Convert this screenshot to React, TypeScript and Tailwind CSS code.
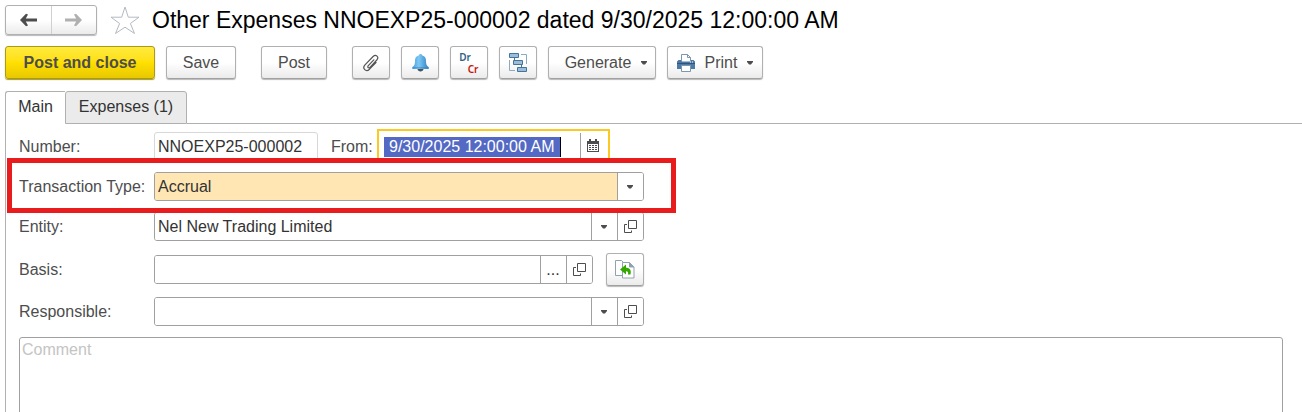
import type { ReactNode } from 'react';

const raised =
  'flex items-center justify-center rounded-[3px] border border-[#b0b0b0] border-b-[#a0a0a0] bg-linear-to-b from-white from-50% to-[#ebebeb] text-[#4d4d4d] shadow-[0_1px_1px_#b8b8b8]';

function Caret() {
  return (
    <svg width="6" height="4" viewBox="0 0 6 4" fill="#4d4d4d">
      <path d="M0 0h6v1L4 3.500H2L0 1z" />
    </svg>
  );
}

function OpenIcon() {
  return (
    <svg width="13" height="13" viewBox="0 0 13 13" fill="none" stroke="#4d4d4d">
      <path d="M4.500.5h8v8h-8z" />
      <path d="M3 4.500H.5v8h7V10.500" />
    </svg>
  );
}

function ArrowIcon({ color, flip }: { color: string; flip?: boolean }) {
  return (
    <svg width="17" height="14" viewBox="0 0 17 14" className={flip ? 'rotate-180' : ''}>
      <path d="M0 7 6 .8 8 1.500 5.800 5.500H17v3H5.800L8 12.500l-2 .7z" fill={color} />
    </svg>
  );
}

function StarIcon() {
  return (
    <svg width="30" height="29" viewBox="0 0 30 29" fill="none" stroke="#b4bac2">
      <path d="M15 1 18.300 11.200H29L20.400 17.500 24.500 27.500 15 21.200 5.500 27.500 9.600 17.500 1 11.200H11.700z" />
    </svg>
  );
}

function ClipIcon() {
  return (
    <svg width="18" height="18" viewBox="0 0 18 18" fill="none" stroke="#555" strokeWidth="1.200" strokeLinecap="round" strokeLinejoin="round">
      <path d="M11.800 5.800 6.300 11.700C4.900 13.300 6.700 14.700 8 13.300L14.800 6C17.400 3 13.900-.2 11.100 2.500L3 10.900C-.2 14.400 4 18.600 7.500 15.200L14 8.500" />
    </svg>
  );
}

function BellIcon() {
  return (
    <svg width="17" height="18" viewBox="0 0 17 18">
      <defs>
        <linearGradient id="bell" x1="0" x2="1">
          <stop offset="0" stopColor="#4a9bd4" />
          <stop offset=".4" stopColor="#7cc8f7" />
          <stop offset="1" stopColor="#2f80bd" />
        </linearGradient>
      </defs>
      <path d="M5.500 15h6c0 1.500-1.500 2.500-3 2.500s-3-1-3-2.500z" fill="#46525c" />
      <path d="M8.500 0C7.200 0 6.800.8 6.700 1.500 3.800 2.200 3 4.200 3 7c0 3.200-.5 4.500-2.500 6-.8 1-.3 2 .8 2h14.400c1.100 0 1.600-1 .8-2-2-1.500-2.500-2.800-2.500-6 0-2.800-.8-4.800-3.700-5.500C10.200.8 9.800 0 8.500 0z" fill="url(#bell)" />
      <path d="M1 13.800h15" stroke="#3a86bd" strokeWidth=".8" />
    </svg>
  );
}

function StructureIcon() {
  return (
    <svg width="18" height="19" viewBox="0 0 18 19" fill="#9bbdd9" stroke="#43749c">
      <path d="M12 1.500h5.500V11M.5 7v10.500H6" fill="none" stroke="#8aa9c2" />
      <path d="M5.500 4.500v4M12.500 11v4" fill="none" />
      <path d="M.5.500h9v4h-9zM4.500 7.500h9v4h-9zM8.500 14.500h9v4h-9z" />
    </svg>
  );
}

function PrinterIcon() {
  return (
    <svg width="18" height="18" viewBox="0 0 18 18">
      <path d="M4.500 8V.5h6l3 3V8" fill="#fff" stroke="#7e95ae" />
      <path d="M10.500.5v3h3" fill="none" stroke="#7e95ae" />
      <path d="M1.500 6H4v1.500h10V6h2.500L18 7.500V15H0V7.500z" fill="#4f79a5" />
      <path d="M0 9.500h18" stroke="#2e5580" />
      <path d="M13 7.500h1v1h-1zM15 7.500h1v1h-1z" fill="#fff" />
      <path d="M4.500 11.500h9v6h-9z" fill="#fff" stroke="#7e95ae" />
    </svg>
  );
}

function CalendarIcon() {
  return (
    <svg width="12" height="13" viewBox="0 0 12 13" shapeRendering="crispEdges">
      <path d="M0 2h12v11H0zM2 0h2v2H2zM8 0h2v2H8z" fill="#4d4d4d" />
      <path d="M1 5h10v7H1z" fill="#fff" />
      <path d="M2 6h2v1H2zM5 6h2v1H5zM8 6h2v1H8zM2 8h2v1H2zM5 8h2v1H5zM8 8h2v1H8zM2 10h2v1H2zM5 10h2v1H5zM8 10h2v1H8z" fill="#4d4d4d" />
    </svg>
  );
}

function FillIcon() {
  return (
    <svg width="20" height="19" viewBox="0 0 20 19" fill="#fff" stroke="#8fa3ad">
      <path d="M.5.500h6l3 3v12h-9z" />
      <path d="M7.500 2.500h7l4.500 4.500v11H7.500z" />
      <path d="M14.500 2.500v4.500h4.500" fill="#8fa3ad" />
      <path d="M5 9.500 11 4.500v3.200c4 0 5.500 2.300 4.500 6.800h-2.500c.5-2.500 0-3.300-2-3.300v3.300z" fill="#35a800" stroke="none" />
    </svg>
  );
}

type FieldProps = {
  id: string;
  label: string;
  value?: string;
  width: string;
  highlight?: boolean;
  actions: { label: string; icon: ReactNode }[];
  children?: ReactNode;
};

function Field({ id, label, value, width, highlight, actions, children }: FieldProps) {
  return (
    <div className="flex h-[29px] items-center">
      <label htmlFor={id} className="w-[135px] shrink-0 whitespace-nowrap text-[#4d4d4d]">
        {label}
      </label>
      <div className={`flex h-[29px] overflow-hidden rounded-[3px] border border-[#a0a0a0] ${width}`}>
        <input
          id={id}
          defaultValue={value}
          className={`min-w-0 flex-1 px-[3px] outline-none ${highlight ? 'bg-[#ffe6b3]' : 'bg-white'}`}
        />
        {actions.map((action) => (
          <button
            key={action.label}
            aria-label={action.label}
            className="flex w-[26px] shrink-0 items-center justify-center border-l border-[#a0a0a0] bg-white pr-px"
          >
            {action.icon}
          </button>
        ))}
      </div>
      {children}
    </div>
  );
}

export default function App() {
  const choose = { label: 'Choose from list', icon: <Caret /> };
  const open = { label: 'Open', icon: <OpenIcon /> };
  const more = { label: 'Select', icon: <span className="text-base leading-5">...</span> };

  return (
    <main className="flex h-screen flex-col overflow-hidden bg-white pl-[5px] font-['Liberation_Sans',Arial,sans-serif] text-base leading-5 text-[#333]">
      <header className="flex shrink-0 items-center pt-[5px]">
        <div className="flex h-[30px] w-[92px] rounded-[3px] border border-[#b0b0b0] bg-linear-to-b from-white from-50% to-[#ebebeb] shadow-[0_1px_1px_#b8b8b8]">
          <button aria-label="Back" className="flex flex-1 items-center justify-center border-r border-[#d0d0d0]">
            <ArrowIcon color="#4d4d4d" />
          </button>
          <button aria-label="Forward" className="flex flex-1 items-center justify-center">
            <ArrowIcon color="#b0b0b0" flip />
          </button>
        </div>
        <button aria-label="Add to favorites" className="ml-[13px]">
          <StarIcon />
        </button>
        <h1 className="ml-3 text-[23px] leading-7 whitespace-nowrap text-black">
          Other Expenses NNOEXP25-000002 dated 9/30/2025 12:00:00 AM
        </h1>
      </header>

      <div className="mt-[11px] flex h-[33px] shrink-0">
        <button className="w-[150px] rounded-[3px] border border-[#a89b1c] bg-linear-to-b from-[#ffea3d] via-[#ffe000] to-[#e8c800] font-bold text-[#4d4d4d] shadow-[0_1px_1px_#a89b1c]">
          Post and close
        </button>
        <button className={`${raised} ml-[11px] w-[70px]`}>Save</button>
        <button className={`${raised} ml-[25px] w-[66px]`}>Post</button>
        <div className="ml-[25px] flex gap-[11px]">
          <button aria-label="Attachments" className={`${raised} w-[38px]`}>
            <ClipIcon />
          </button>
          <button aria-label="Reminders" className={`${raised} w-[38px]`}>
            <BellIcon />
          </button>
          <button className={`${raised} w-[38px] flex-col font-['Noto_Sans',sans-serif] text-[10px] leading-3 font-semibold`}>
            <span className="mr-2 text-[#2d6187]">Dr</span>
            <span className="ml-2 text-[#c8140a]">Cr</span>
          </button>
          <button aria-label="Related documents" className={`${raised} w-[38px]`}>
            <StructureIcon />
          </button>
          <button className={`${raised} w-[108px] gap-2.5 pl-2`}>
            Generate
            <Caret />
          </button>
          <button className={`${raised} w-24`}>
            <PrinterIcon />
            <span className="mr-2.5 ml-2.5">Print</span>
            <Caret />
          </button>
        </div>
      </div>

      <div role="tablist" className="mt-3 flex h-[33px] shrink-0">
        <button
          role="tab"
          aria-selected="true"
          className="w-[60px] rounded-tl-[3px] border-t border-l border-[#b0b0b0] bg-white pb-0.5"
        >
          Main
        </button>
        <button
          role="tab"
          aria-selected="false"
          className="w-[122px] rounded-t-[3px] border border-[#b0b0b0] bg-[#ebebeb] pb-0.5"
        >
          Expenses (1)
        </button>
        <div className="flex-1 border-b border-[#b0b0b0]" />
      </div>

      <form className="flex-1 border-l border-[#b0b0b0] pr-[19px] pl-[13px]">
        <div className="flex h-[34px] items-center pt-[11px]">
          <label htmlFor="number" className="w-[135px] shrink-0 text-[#4d4d4d]">
            Number:
          </label>
          <input
            id="number"
            defaultValue="NNOEXP25-000002"
            className="h-[29px] w-[164px] rounded-[3px] border border-[#d8d8d8] px-[3px] outline-none"
          />
          <label htmlFor="date" className="ml-[13px] w-[46px] text-[#4d4d4d]">
            From:
          </label>
          <div className="flex h-[35px] w-[233px] border-2 border-[#fcc922] bg-white py-0.5">
            <div className="flex flex-1 items-center pl-[5px]">
              <input
                id="date"
                defaultValue="9/30/2025 12:00:00 AM"
                className="h-5 w-[177px] border-r border-black bg-[#5369c4] pl-[5px] text-white outline-none"
              />
            </div>
            <button aria-label="Calendar" className="flex w-7 items-center justify-center border-l border-[#a0a0a0] pr-1 pb-0.5">
              <CalendarIcon />
            </button>
          </div>
        </div>

        <div className="relative z-10 -ml-3 h-[55px] w-[669px] border-[5px] border-[#e81c1c] bg-white pt-[9px] pl-[7px]">
          <Field id="transaction-type" label="Transaction Type:" value="Accrual" width="w-[490px]" highlight actions={[choose]} />
        </div>

        <div className="-mt-px">
          <Field id="entity" label="Entity:" value="Nel New Trading Limited" width="w-[490px]" actions={[choose, open]} />
        </div>
        <div className="mt-3.5">
          <Field id="basis" label="Basis:" width="w-[439px]" actions={[more, open]}>
            <button aria-label="Fill from basis" className={`${raised} ml-[13px] h-[33px] w-[38px]`}>
              <FillIcon />
            </button>
          </Field>
        </div>
        <div className="mt-[13px]">
          <Field id="responsible" label="Responsible:" width="w-[490px]" actions={[choose, open]} />
        </div>

        <textarea
          aria-label="Comment"
          placeholder="Comment"
          className="mt-[11px] block h-24 w-full resize-none rounded-[3px] border border-[#a0a0a0] px-0.5 py-0.5 outline-none placeholder:text-[#c4c4c4]"
        />
      </form>
    </main>
  );
}
